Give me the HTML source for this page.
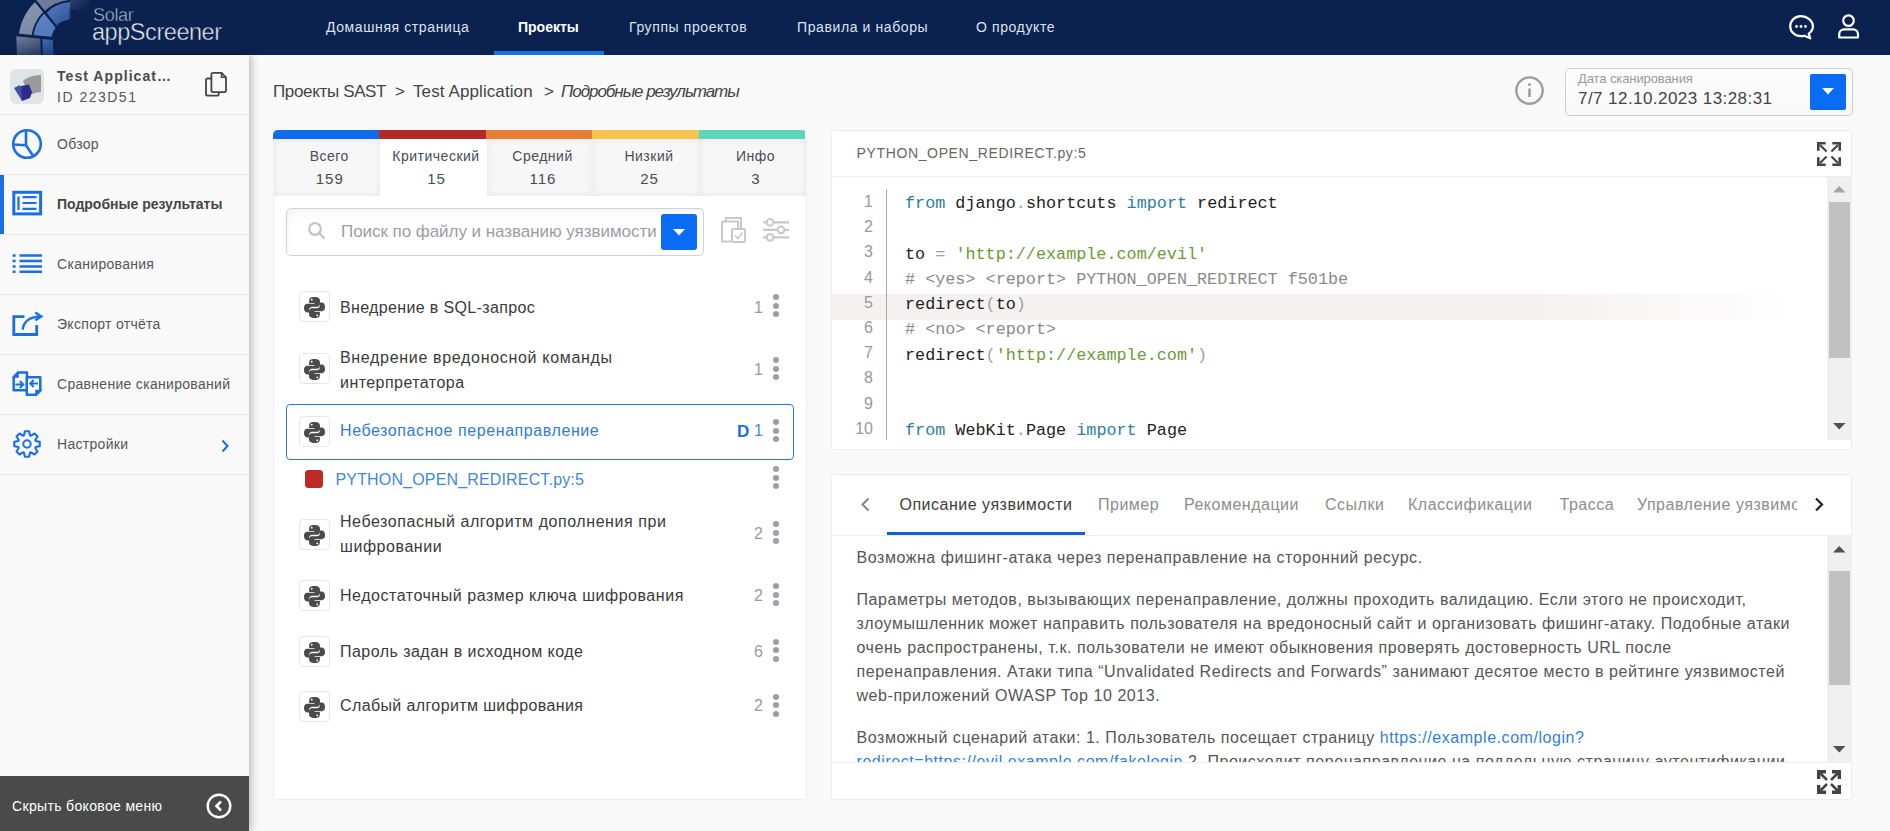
<!DOCTYPE html>
<html><head><meta charset="utf-8">
<style>
*{box-sizing:border-box;margin:0;padding:0}
html,body{width:1890px;height:831px;overflow:hidden}
body{background:#f9f9f9;font-family:"Liberation Sans",sans-serif;color:#444;position:relative}
.a{position:absolute;white-space:nowrap}
svg{position:absolute;overflow:visible}
.hdr{position:absolute;left:0;top:0;width:1890px;height:55px;background:#0b2150;overflow:hidden}
.nav{position:absolute;top:20px;font-size:14px;line-height:14px;color:#dde3ee;white-space:nowrap;letter-spacing:.6px}
.nav.act{color:#fff;font-weight:bold;letter-spacing:0}
.side{position:absolute;left:0;top:55px;width:249px;height:776px;background:#f9f9f9;box-shadow:2px 0 8px rgba(0,0,0,.28)}
.sep{position:absolute;left:0;width:249px;height:1px;background:#e8e8e8}
.st{position:absolute;left:57px;font-size:14px;line-height:14px;color:#555;white-space:nowrap;letter-spacing:.3px}
.panel{position:absolute;background:#fff;border:1px solid #ededed;border-radius:4px}
.sev{position:absolute;top:139px;height:57px;background:#f7f7f7;box-shadow:inset 0 0 9px rgba(0,0,0,.07)}
.sev .l{position:absolute;left:5px;right:0;top:10px;text-align:center;font-size:14px;line-height:14px;color:#474d58;letter-spacing:.5px}
.sev .n{position:absolute;left:6px;right:0;top:32px;text-align:center;font-size:15px;line-height:15px;letter-spacing:1px;color:#474d58}
.it{position:absolute;left:340px;font-size:16px;line-height:25px;color:#3a3a3a;letter-spacing:.45px;white-space:nowrap}
.pybox{position:absolute;left:299px;width:31px;height:31px;border:1px solid #e6e6e6;border-radius:4px;background:#fff}
.cnt{position:absolute;left:754px;font-size:16px;line-height:16px;color:#9a9a9a}
.keb{position:absolute;left:773px;width:6px}
.keb i{display:block;width:6px;height:6px;border-radius:50%;background:#9d9daa;margin-bottom:2.5px}
.code{position:absolute;left:905px;font-family:"Liberation Mono",monospace;font-size:16.8px;line-height:25.2px;color:#222;white-space:pre}
.ln{position:absolute;left:840px;width:33px;text-align:right;font-family:"Liberation Sans",sans-serif;font-size:16px;line-height:25.2px;color:#999}
.kw{color:#2e7ea3}.str{color:#6c9a37}.cm{color:#8a8a8a}.pn{color:#a0a0a0}
.tab{position:absolute;top:497px;font-size:16px;line-height:16px;color:#8d8d8d;letter-spacing:.5px;white-space:nowrap}
.p{position:absolute;left:856px;font-size:16px;line-height:24px;color:#555;letter-spacing:.55px;white-space:nowrap}
.lnk{color:#2f7fd8}
.sb{position:absolute;left:1827px;width:25px;background:#f0f0f0}
.thumb{position:absolute;left:1829px;width:21px;background:#c1c1c1}
</style></head><body>

<div class="hdr">
  <svg style="left:0;top:0" width="100" height="55" viewBox="0 0 100 55">
    <defs>
      <linearGradient id="g1" x1="0" y1="0" x2="0.3" y2="1"><stop offset="0" stop-color="#8f9bb4"/><stop offset="1" stop-color="#5e6e90"/></linearGradient>
      <linearGradient id="g2" x1="0" y1="0" x2="0.5" y2="1"><stop offset="0" stop-color="#6e7e9e"/><stop offset="1" stop-color="#34466c"/></linearGradient>
      <linearGradient id="b1" x1="0" y1="0" x2="0.4" y2="1"><stop offset="0" stop-color="#5f86c6"/><stop offset="1" stop-color="#3a64a8"/></linearGradient>
      <linearGradient id="b2" x1="0" y1="0" x2="0.3" y2="1"><stop offset="0" stop-color="#3f67ad"/><stop offset="1" stop-color="#1f4a8c"/></linearGradient>
      <linearGradient id="b3" x1="0" y1="0" x2="1" y2="1"><stop offset="0" stop-color="#5a7fc0"/><stop offset="1" stop-color="#2b5296"/></linearGradient>
      <linearGradient id="fd" x1="0" y1="0" x2="1" y2="0.6"><stop offset="0" stop-color="#2c4170"/><stop offset="1" stop-color="#0b2150"/></linearGradient>
      <clipPath id="cu"><path d="M0 0H70.3V18L53 38.5L0 34Z"/></clipPath>
    </defs>
    <g clip-path="url(#cu)">
      <circle cx="75" cy="42" r="50.2" fill="none" stroke="url(#g1)" stroke-width="12.6"/>
      <circle cx="75" cy="42" r="33" fill="none" stroke="url(#b1)" stroke-width="18"/>
    </g>
    <path d="M36 -1L56 26L70.3 18V-1Z" fill="#0b2150"/>
    <g clip-path="url(#cu)">
      <path d="M35 0A50 50 0 0 1 70.3 -6V8.5A43 43 0 0 0 45 11.5Z" fill="#6d7c9c"/>
      <path d="M46.5 13A43 43 0 0 1 69.6 1.3V19.5A24 24 0 0 0 56 25.5Z" fill="url(#b3)"/>
    </g>
    <path d="M16.3 36.2L40.3 38.8L40.8 55H17Z" fill="url(#g2)"/>
    <path d="M42.4 39L52.8 40L53.7 55H43Z" fill="url(#b2)"/>
    <path d="M14 34.4L54 38.3" stroke="#0b2150" stroke-width="2.4"/>
    <path d="M33.5 -1.5L56.5 27" stroke="#0b2150" stroke-width="2.3"/>
    <path d="M45 12A43 43 0 0 1 70.3 1" fill="none" stroke="#0b2150" stroke-width="2.2"/>
    <path d="M70.3 0H90V10H70.3Z" fill="url(#fd)"/>
  </svg>
  <div class="a" style="left:93px;top:6px;font-size:18px;line-height:18px;color:#a9b6ce;letter-spacing:-.3px;-webkit-text-stroke:.4px #0b2150">Solar</div>
  <div class="a" style="left:92px;top:20.5px;font-size:23.5px;line-height:23.5px;color:#eef1f6;letter-spacing:-.45px;-webkit-text-stroke:.5px #0b2150">appScreener</div>
  <div class="nav" style="left:326px">Домашняя страница</div>
  <div class="nav act" style="left:518px">Проекты</div>
  <div class="nav" style="left:629px">Группы проектов</div>
  <div class="nav" style="left:797px">Правила и наборы</div>
  <div class="nav" style="left:976px">О продукте</div>
  <div class="a" style="left:494px;top:51px;width:110px;height:4px;background:#1673ea"></div>
  <!-- chat icon -->
  <svg style="left:1788px;top:14px" width="26" height="26" viewBox="0 0 26 26">
    <path d="M13 2.2C7 2.2 2.2 6.6 2.2 12.2S7 22.2 13 22.2c1.2 0 2.3-.2 3.3-.5l6 2.6-1.6-4.6c2.6-1.9 4.2-4.7 4.2-7.5C24.9 6.6 19 2.2 13 2.2z" fill="none" stroke="#fff" stroke-width="2.2" stroke-linejoin="round"/>
    <circle cx="8.5" cy="12.5" r="1.4" fill="#fff"/><circle cx="13" cy="12.5" r="1.4" fill="#fff"/><circle cx="17.5" cy="12.5" r="1.4" fill="#fff"/>
  </svg>
  <!-- user icon -->
  <svg style="left:1837px;top:14px" width="24" height="26" viewBox="0 0 24 26">
    <circle cx="11.5" cy="6.6" r="5.3" fill="none" stroke="#fff" stroke-width="2.2"/>
    <path d="M2.2 23.5v-3.2c0-3 2.2-5 5-5h8.8c2.8 0 5 2 5 5v3.2z" fill="none" stroke="#fff" stroke-width="2.2" stroke-linejoin="round"/>
  </svg>
</div>

<div class="side">
</div>
<!-- sidebar content (absolute to body) -->
<div class="a" style="left:10px;top:69px;width:34px;height:35px;border-radius:6px;background:#dfe4e8"></div>
<svg style="left:10px;top:69px" width="34" height="35" viewBox="0 0 34 35">
  <path d="M13 12 C17 8 23 6.5 31 6 L31 23 C25 23.5 22 25 19.5 27 Z" fill="#9a9a9a"/>
  <path d="M4 19 L10 16 L15 28 L12 32 Z" fill="#3a55a8"/>
  <path d="M11 17 L19 15.5 L22 23 L20 29 L12 32 Z" fill="#2f2b8a"/>
</svg>
<div class="a" style="left:57px;top:69px;font-size:14px;line-height:14px;font-weight:bold;color:#4a4a4a;letter-spacing:1.05px">Test Applicat…</div>
<div class="a" style="left:57px;top:90px;font-size:14px;line-height:14px;color:#555;letter-spacing:1.5px">ID 223D51</div>
<svg style="left:204px;top:71px" width="24" height="26" viewBox="0 0 24 26">
  <path d="M7.5 7.5H3.6c-1 0-1.6.6-1.6 1.6v14c0 1 .6 1.6 1.6 1.6h9.6c1 0 1.6-.6 1.6-1.6v-1.8" fill="none" stroke="#444" stroke-width="1.8"/>
  <path d="M9 1.8h8.5l4.5 4.5v13.2c0 1-.6 1.6-1.6 1.6H9c-1 0-1.6-.6-1.6-1.6V3.4c0-1 .6-1.6 1.6-1.6z" fill="none" stroke="#444" stroke-width="1.8" stroke-linejoin="round"/>
  <path d="M17.5 1.8v4.5H22" fill="none" stroke="#444" stroke-width="1.6"/>
</svg>
<div class="sep" style="top:114px"></div>
<div class="sep" style="top:174px"></div>
<div class="sep" style="top:234px"></div>
<div class="sep" style="top:294px"></div>
<div class="sep" style="top:354px"></div>
<div class="sep" style="top:414px"></div>
<div class="sep" style="top:474px"></div>
<div class="a" style="left:0;top:175px;width:4px;height:59px;background:#1a6fe6"></div>

<!-- icons -->
<svg style="left:11px;top:128px" width="32" height="32" viewBox="0 0 32 32">
  <circle cx="16" cy="16" r="13.8" fill="none" stroke="#1a6fe6" stroke-width="2.6"/>
  <path d="M15 2.5V17.3M2.5 16.5L15 17.3L22.5 28.5" fill="none" stroke="#1a6fe6" stroke-width="2.6" stroke-linejoin="round"/>
</svg>
<svg style="left:11px;top:189px" width="32" height="28" viewBox="0 0 32 28">
  <rect x="2.8" y="3.3" width="26.8" height="21.6" fill="none" stroke="#1a6fe6" stroke-width="3"/>
  <path d="M7.5 7.5v13.5M11.5 8.2h14M11.5 14h14M11.5 19.8h14" fill="none" stroke="#1a6fe6" stroke-width="2.2"/>
</svg>
<svg style="left:11px;top:253px" width="32" height="22" viewBox="0 0 32 22">
  <path d="M1.6 2.5h3M8.5 2.5h22.5M1.6 8h3M8.5 8h22.5M1.6 13.5h3M8.5 13.5h22.5M1.6 18.8h3M8.5 18.8h22.5" fill="none" stroke="#1a6fe6" stroke-width="2.6"/>
</svg>
<svg style="left:11px;top:310px" width="32" height="28" viewBox="0 0 32 28">
  <path d="M13.4 6.7H2.8V24.5H25.7V15" fill="none" stroke="#1a6fe6" stroke-width="2.8"/>
  <path d="M11.7 19.6C12.5 12 18 7.2 29 6.4" fill="none" stroke="#1a6fe6" stroke-width="2.4"/>
  <path d="M24.3 2.4L30.3 6.4L24.3 10.2" fill="none" stroke="#1a6fe6" stroke-width="2.4"/>
</svg>
<svg style="left:11px;top:369px" width="32" height="28" viewBox="0 0 32 28">
  <path d="M7 3.6H16V21.2H2.7V8Z" fill="none" stroke="#1a6fe6" stroke-width="2.5" stroke-linejoin="round"/>
  <path d="M2.7 8L7 3.6V8Z" fill="#1a6fe6" stroke="#1a6fe6" stroke-width="1.5"/>
  <path d="M15.8 8.2H29.3V21.6L25 25.8H15.8Z" fill="#fff" stroke="#1a6fe6" stroke-width="2.5" stroke-linejoin="round"/>
  <path d="M29.3 21.6H25V25.8Z" fill="#1a6fe6" stroke="#1a6fe6" stroke-width="1.5"/>
  <path d="M4.5 15.5H12M8.8 12L12.3 15.5L8.8 19M27 14.5H19.5M22.7 11L19.2 14.5L22.7 18" fill="none" stroke="#1a6fe6" stroke-width="2"/>
</svg>
<svg style="left:11px;top:428px" width="32" height="32" viewBox="0 0 32 32">
  <path d="M13.00 7.30 L13.87 3.28 L18.13 3.28 L19.00 7.30 L20.03 7.73 L23.49 5.50 L26.50 8.51 L24.27 11.97 L24.70 13.00 L28.72 13.87 L28.72 18.13 L24.70 19.00 L24.27 20.03 L26.50 23.49 L23.49 26.50 L20.03 24.27 L19.00 24.70 L18.13 28.72 L13.87 28.72 L13.00 24.70 L11.97 24.27 L8.51 26.50 L5.50 23.49 L7.73 20.03 L7.30 19.00 L3.28 18.13 L3.28 13.87 L7.30 13.00 L7.73 11.97 L5.50 8.51 L8.51 5.50 L11.97 7.73Z" fill="none" stroke="#1a6fe6" stroke-width="2.1" stroke-linejoin="round"/>
  <circle cx="16" cy="16" r="3.7" fill="none" stroke="#1a6fe6" stroke-width="2"/>
</svg>

<div class="st" style="top:137px">Обзор</div>
<div class="st" style="top:197px;font-weight:bold;letter-spacing:0;color:#444">Подробные результаты</div>
<div class="st" style="top:257px">Сканирования</div>
<div class="st" style="top:317px">Экспорт отчёта</div>
<div class="st" style="top:377px">Сравнение сканирований</div>
<div class="st" style="top:437px">Настройки</div>
<svg style="left:219px;top:438px" width="12" height="16" viewBox="0 0 12 16">
  <path d="M3.5 2.5L8.5 8L3.5 13.5" fill="none" stroke="#1a6fe6" stroke-width="2"/>
</svg>

<div class="a" style="left:0;top:776px;width:249px;height:55px;background:#4a4a4a"></div>
<div class="a" style="left:12px;top:799px;font-size:14px;line-height:14px;color:#fff;letter-spacing:.34px">Скрыть боковое меню</div>
<svg style="left:205px;top:792px" width="28" height="28" viewBox="0 0 28 28">
  <circle cx="14" cy="14" r="11.3" fill="none" stroke="#fff" stroke-width="2.4"/>
  <path d="M16 9.5L11.5 14L16 18.5" fill="none" stroke="#fff" stroke-width="2.6"/>
</svg>

<!-- breadcrumb -->
<div class="a" style="left:273px;top:83px;font-size:17px;line-height:17px;color:#444">
  <span style="letter-spacing:-.35px">Проекты SAST</span><span style="position:absolute;left:122px">&gt;</span><span style="position:absolute;left:140px;letter-spacing:.1px">Test Application</span><span style="position:absolute;left:271px">&gt;</span><span style="position:absolute;left:288px;font-style:italic;letter-spacing:-1.05px">Подробные результаты</span>
</div>

<!-- info + date select -->
<svg style="left:1514px;top:76px" width="30" height="30" viewBox="0 0 30 30">
  <circle cx="15.5" cy="14.6" r="13.2" fill="none" stroke="#9a9ca6" stroke-width="2.4"/>
  <path d="M15.5 12.5v8.5" stroke="#9a9ca6" stroke-width="2.6"/><circle cx="15.5" cy="8.6" r="1.5" fill="#9a9ca6"/>
</svg>
<div class="a" style="left:1565px;top:68px;width:288px;height:48px;border:1px solid #cfcfcf;border-radius:5px;background:linear-gradient(#fdfdfd,#f8f8f8)"></div>
<div class="a" style="left:1578px;top:72px;font-size:13px;line-height:13px;color:#9a9a9a;letter-spacing:-.1px">Дата сканирования</div>
<div class="a" style="left:1578px;top:89.5px;font-size:17px;line-height:17px;color:#444;letter-spacing:.44px">7/7 12.10.2023 13:28:31</div>
<div class="a" style="left:1810px;top:74px;width:36px;height:36px;border-radius:2px;background:#0a6cf5"></div>
<svg style="left:1822px;top:88px" width="12" height="7" viewBox="0 0 12 7"><path d="M0 0h12L6 6.5z" fill="#fff"/></svg>

<!-- left panel -->
<div class="panel" style="left:273px;top:130px;width:534px;height:670px;border-radius:3px"></div>
<div class="a" style="left:273px;top:130px;width:533.5px;height:9px;border-radius:5px 5px 0 0;overflow:hidden;display:flex">
  <div style="flex:106px 0 0;background:#0f6deb"></div><div style="flex:107px 0 0;background:#b32925"></div><div style="flex:106px 0 0;background:#e67d35"></div><div style="flex:107px 0 0;background:#f5c54e"></div><div style="flex:106px 0 0;background:#5cd5b9"></div>
</div>
<div class="sev" style="left:273.5px;width:106.5px"><div class="l">Всего</div><div class="n">159</div></div>
<div class="sev" style="left:380px;width:107px;background:#fff;box-shadow:none"><div class="l">Критический</div><div class="n">15</div></div>
<div class="sev" style="left:487px;width:106px"><div class="l">Средний</div><div class="n">116</div></div>
<div class="sev" style="left:593px;width:107px"><div class="l">Низкий</div><div class="n">25</div></div>
<div class="sev" style="left:700px;width:106px"><div class="l">Инфо</div><div class="n">3</div></div>

<!-- search -->
<div class="a" style="left:286px;top:208px;width:418px;height:48px;border:1px solid #d2d2d2;border-radius:5px;background:linear-gradient(#fafafa,#fff 40%);box-shadow:inset 2px 2px 4px rgba(0,0,0,.03)"></div>
<svg style="left:307px;top:221px" width="20" height="20" viewBox="0 0 20 20">
  <circle cx="8" cy="8" r="5.8" fill="none" stroke="#c4c4c4" stroke-width="2.2"/><path d="M12.3 12.3L17.5 17.5" stroke="#c4c4c4" stroke-width="2.4"/>
</svg>
<div class="a" style="left:341px;top:222.5px;font-size:17px;line-height:17px;color:#9c9ca4;letter-spacing:-.05px">Поиск по файлу и названию уязвимости</div>
<div class="a" style="left:661px;top:214px;width:36px;height:36px;border-radius:3px;background:#0a6cf5"></div>
<svg style="left:673px;top:229px" width="12" height="7" viewBox="0 0 12 7"><path d="M0 0h12L6 6.5z" fill="#fff"/></svg>
<svg style="left:720px;top:216px" width="28" height="28" viewBox="0 0 28 28">
  <path d="M6 5.5V2h15v13" fill="none" stroke="#c8c8c8" stroke-width="2"/>
  <path d="M2 5.5h16v13" fill="none" stroke="#c8c8c8" stroke-width="2"/>
  <path d="M2 5.5v20h9" fill="none" stroke="#c8c8c8" stroke-width="2"/>
  <rect x="12" y="13" width="13" height="13" rx="1.5" fill="#fff" stroke="#c8c8c8" stroke-width="2"/>
  <path d="M15 19.5l3 3 4.5-6" fill="none" stroke="#c8c8c8" stroke-width="1.6"/>
</svg>
<svg style="left:762px;top:217px" width="28" height="26" viewBox="0 0 28 26">
  <path d="M1 5.3h26M1 12.8h26M1 20.3h26" stroke="#c8c8c8" stroke-width="2.2"/>
  <circle cx="8" cy="5.3" r="3.4" fill="#fff" stroke="#c8c8c8" stroke-width="2"/>
  <circle cx="19" cy="12.8" r="3.4" fill="#fff" stroke="#c8c8c8" stroke-width="2"/>
  <circle cx="8" cy="20.3" r="3.4" fill="#fff" stroke="#c8c8c8" stroke-width="2"/>
</svg>

<!-- list -->
<svg width="0" height="0" style="position:absolute"><defs>
  <g id="py">
    <path d="M11.8 1C7.6 1 6.4 2.7 6.4 4.6V7.3h5.6v.9H4.3C2.3 8.2 1 10 1 12.5s1.3 4.6 3.3 4.6h2v-2.7c0-1.8 1.4-3.2 3.2-3.2h5.4c1.6 0 2.8-1.3 2.8-2.9V4.6C17.7 2.7 16 1 11.8 1z" fill="#4b4b4b"/>
    <circle cx="9.1" cy="3.8" r="1" fill="#fff"/>
    <path d="M12.2 23c4.2 0 5.4-1.7 5.4-3.6v-2.7H12v-.9h7.7c2 0 3.3-1.8 3.3-4.3s-1.3-4.6-3.3-4.6h-2v2.7c0 1.8-1.4 3.2-3.2 3.2H9.1c-1.6 0-2.8 1.3-2.8 2.9v3.7c0 1.9 1.7 3.6 5.9 3.6z" fill="#4b4b4b"/>
    <circle cx="14.9" cy="20.2" r="1" fill="#fff"/>
  </g>
</defs></svg>

<div class="pybox" style="top:291px"></div><svg style="left:303px;top:296px" width="23" height="23" viewBox="0 0 24 24"><use href="#py"/></svg>
<div class="it" style="top:294.5px;letter-spacing:.35px">Внедрение в SQL-запрос</div>
<div class="cnt" style="top:299.5px">1</div>
<div class="keb" style="top:294px"><i></i><i></i><i></i></div>

<div class="pybox" style="top:353px"></div><svg style="left:303px;top:358px" width="23" height="23" viewBox="0 0 24 24"><use href="#py"/></svg>
<div class="it" style="top:344.5px"><span style="letter-spacing:.68px">Внедрение вредоносной команды</span><br>интерпретатора</div>
<div class="cnt" style="top:361.5px">1</div>
<div class="keb" style="top:357px"><i></i><i></i><i></i></div>

<div class="a" style="left:286px;top:404px;width:508px;height:56px;border:1.3px solid #2f7ad0;border-radius:4px"></div>
<div class="pybox" style="top:416px"></div><svg style="left:303px;top:421px" width="23" height="23" viewBox="0 0 24 24"><use href="#py"/></svg>
<div class="it" style="top:418px;color:#2f7cd6;letter-spacing:.58px">Небезопасное перенаправление</div>
<div class="a" style="left:737px;top:423px;font-size:17px;line-height:17px;font-weight:bold;color:#1c6fe0">D</div>
<div class="cnt" style="top:423px;color:#4a88d6">1</div>
<div class="keb" style="top:419px"><i></i><i></i><i></i></div>

<div class="a" style="left:305px;top:470px;width:18px;height:18px;border-radius:3.5px;background:#be2a25"></div>
<div class="a" style="left:335.5px;top:471.5px;font-size:16px;line-height:16px;color:#3f87dc;letter-spacing:.16px">PYTHON_OPEN_REDIRECT.py:5</div>
<div class="keb" style="top:466px"><i></i><i></i><i></i></div>

<div class="pybox" style="top:518.5px"></div><svg style="left:303px;top:523.5px" width="23" height="23" viewBox="0 0 24 24"><use href="#py"/></svg>
<div class="it" style="top:508.7px;letter-spacing:.56px">Небезопасный алгоритм дополнения при<br>шифровании</div>
<div class="cnt" style="top:526px">2</div>
<div class="keb" style="top:521px"><i></i><i></i><i></i></div>

<div class="pybox" style="top:580px"></div><svg style="left:303px;top:585px" width="23" height="23" viewBox="0 0 24 24"><use href="#py"/></svg>
<div class="it" style="top:583px;letter-spacing:.53px">Недостаточный размер ключа шифрования</div>
<div class="cnt" style="top:588px">2</div>
<div class="keb" style="top:583px"><i></i><i></i><i></i></div>

<div class="pybox" style="top:635.5px"></div><svg style="left:303px;top:640.5px" width="23" height="23" viewBox="0 0 24 24"><use href="#py"/></svg>
<div class="it" style="top:638.5px;letter-spacing:.46px">Пароль задан в исходном коде</div>
<div class="cnt" style="top:643.5px">6</div>
<div class="keb" style="top:638.5px"><i></i><i></i><i></i></div>

<div class="pybox" style="top:691px"></div><svg style="left:303px;top:696px" width="23" height="23" viewBox="0 0 24 24"><use href="#py"/></svg>
<div class="it" style="top:693px;letter-spacing:.38px">Слабый алгоритм шифрования</div>
<div class="cnt" style="top:698px">2</div>
<div class="keb" style="top:693.5px"><i></i><i></i><i></i></div>

<!-- code panel -->
<div class="panel" style="left:831px;top:129.5px;width:1021px;height:320px;border-radius:3px"></div>
<div class="a" style="left:856.5px;top:145.5px;font-size:14px;line-height:14px;color:#666;letter-spacing:.64px">PYTHON_OPEN_REDIRECT.py:5</div>
<svg style="left:1816.5px;top:142px" width="24" height="24" viewBox="0 0 24 24">
  <path d="M1.3 8.7V1.3H8.7M15.3 1.3H22.7V8.7M22.7 15.3V22.7H15.3M8.7 22.7H1.3V15.3" fill="none" stroke="#444" stroke-width="2.6"/>
  <path d="M3 3L9.6 9.6M21 3L14.4 9.6M21 21L14.4 14.4M3 21L9.6 14.4" stroke="#444" stroke-width="2.1"/>
</svg>
<div class="a" style="left:832px;top:176px;width:1019px;height:1px;background:#ececec"></div>
<div class="a" style="left:832px;top:294px;width:995px;height:25.5px;background:linear-gradient(90deg,#f5f1f0 0%,#f5f1f0 71%,#fff 97%)"></div>
<div class="a" style="left:886px;top:189px;width:1.2px;height:251px;background:#a8a8a8"></div>
<div class="ln" style="top:189px">1<br>2<br>3<br>4<br>5<br>6<br>7<br>8<br>9<br>10</div>
<div class="code" style="top:191.4px"><span class="kw">from</span> django<span class="pn">.</span>shortcuts <span class="kw">import</span> redirect

to <span class="pn">=</span> <span class="str">'http://example.com/evil'</span>
<span class="cm"># &lt;yes&gt; &lt;report&gt; PYTHON_OPEN_REDIRECT f501be</span>
redirect<span class="pn">(</span>to<span class="pn">)</span>
<span class="cm"># &lt;no&gt; &lt;report&gt;</span>
redirect<span class="pn">(</span><span class="str">'http://example.com'</span><span class="pn">)</span>


<span class="kw">from</span> WebKit<span class="pn">.</span>Page <span class="kw">import</span> Page</div>
<div class="sb" style="top:177px;height:263px"></div>
<div class="thumb" style="top:202px;height:156px"></div>
<svg style="left:1833px;top:186px" width="13" height="7" viewBox="0 0 13 7"><path d="M0 6.5h12.5L6.25 0z" fill="#a3a3a3"/></svg>
<svg style="left:1833px;top:423px" width="13" height="7" viewBox="0 0 13 7"><path d="M0 0h12.5L6.25 6.5z" fill="#505050"/></svg>

<!-- description panel -->
<div class="panel" style="left:831px;top:474px;width:1021px;height:326px;border-radius:3px"></div>
<svg style="left:859px;top:496px" width="14" height="17" viewBox="0 0 14 17"><path d="M9.5 2.5L3.5 8.5L9.5 14.5" fill="none" stroke="#888" stroke-width="2"/></svg>
<div class="tab" style="left:899.5px;color:#3d3d3d">Описание уязвимости</div>
<div class="tab" style="left:1098px">Пример</div>
<div class="tab" style="left:1184px">Рекомендации</div>
<div class="tab" style="left:1325px">Ссылки</div>
<div class="tab" style="left:1408px">Классификации</div>
<div class="tab" style="left:1559.5px">Трасса</div>
<div class="a" style="left:1636px;top:490px;width:161px;height:30px;overflow:hidden"><div class="tab" style="left:1px;top:7px">Управление уязвимостями</div></div>
<svg style="left:1812px;top:496px" width="14" height="17" viewBox="0 0 14 17"><path d="M4 2.5L10 8.5L4 14.5" fill="none" stroke="#222" stroke-width="2.2"/></svg>
<div class="a" style="left:832px;top:535px;width:1019px;height:1px;background:#ececec"></div>
<div class="a" style="left:887px;top:531.5px;width:198px;height:3.5px;background:#0b63d6"></div>

<div class="a" style="left:832px;top:536px;width:995px;height:226px;overflow:hidden">
  <div class="p" style="left:24.5px;top:9.8px">Возможна фишинг-атака через перенаправление на сторонний ресурс.</div>
  <div class="p" style="left:24.5px;top:51.8px">Параметры методов, вызывающих перенаправление, должны проходить валидацию. Если этого не происходит,</div>
  <div class="p" style="left:24.5px;top:75.8px">злоумышленник может направить пользователя на вредоносный сайт и организовать фишинг-атаку. Подобные атаки</div>
  <div class="p" style="left:24.5px;top:99.8px">очень распространены, т.к. пользователи не имеют обыкновения проверять достоверность URL после</div>
  <div class="p" style="left:24.5px;top:123.8px">перенаправления. Атаки типа “Unvalidated Redirects and Forwards” занимают десятое место в рейтинге уязвимостей</div>
  <div class="p" style="left:24.5px;top:147.8px">web-приложений OWASP Top 10 2013.</div>
  <div class="p" style="left:24.5px;top:189.8px">Возможный сценарий атаки: 1. Пользователь посещает страницу <span class="lnk">https://example.com/login?</span></div>
  <div class="p" style="left:24.5px;top:213.8px"><span class="lnk">redirect=https://evil.example.com/fakelogin</span> 2. Происходит перенаправление на поддельную страницу аутентификации</div>
</div>
<div class="sb" style="top:536px;height:226px"></div>
<div class="thumb" style="top:571px;height:114px"></div>
<svg style="left:1833px;top:546px" width="13" height="7" viewBox="0 0 13 7"><path d="M0 6.5h12.5L6.25 0z" fill="#505050"/></svg>
<svg style="left:1833px;top:745.5px" width="13" height="7" viewBox="0 0 13 7"><path d="M0 0h12.5L6.25 6.5z" fill="#505050"/></svg>
<div class="a" style="left:832px;top:762px;width:1019px;height:1px;background:#f0f0f0"></div>
<svg style="left:1816.5px;top:770px" width="24" height="24" viewBox="0 0 24 24">
  <path d="M1.7 9V1.7H9M15 1.7H22.3V9M22.3 15V22.3H15M9 22.3H1.7V15" fill="none" stroke="#444" stroke-width="3.4"/>
  <path d="M3 3L10 10M21 3L14 10M21 21L14 14M3 21L10 14" stroke="#444" stroke-width="2.5"/>
</svg>

</body></html>
